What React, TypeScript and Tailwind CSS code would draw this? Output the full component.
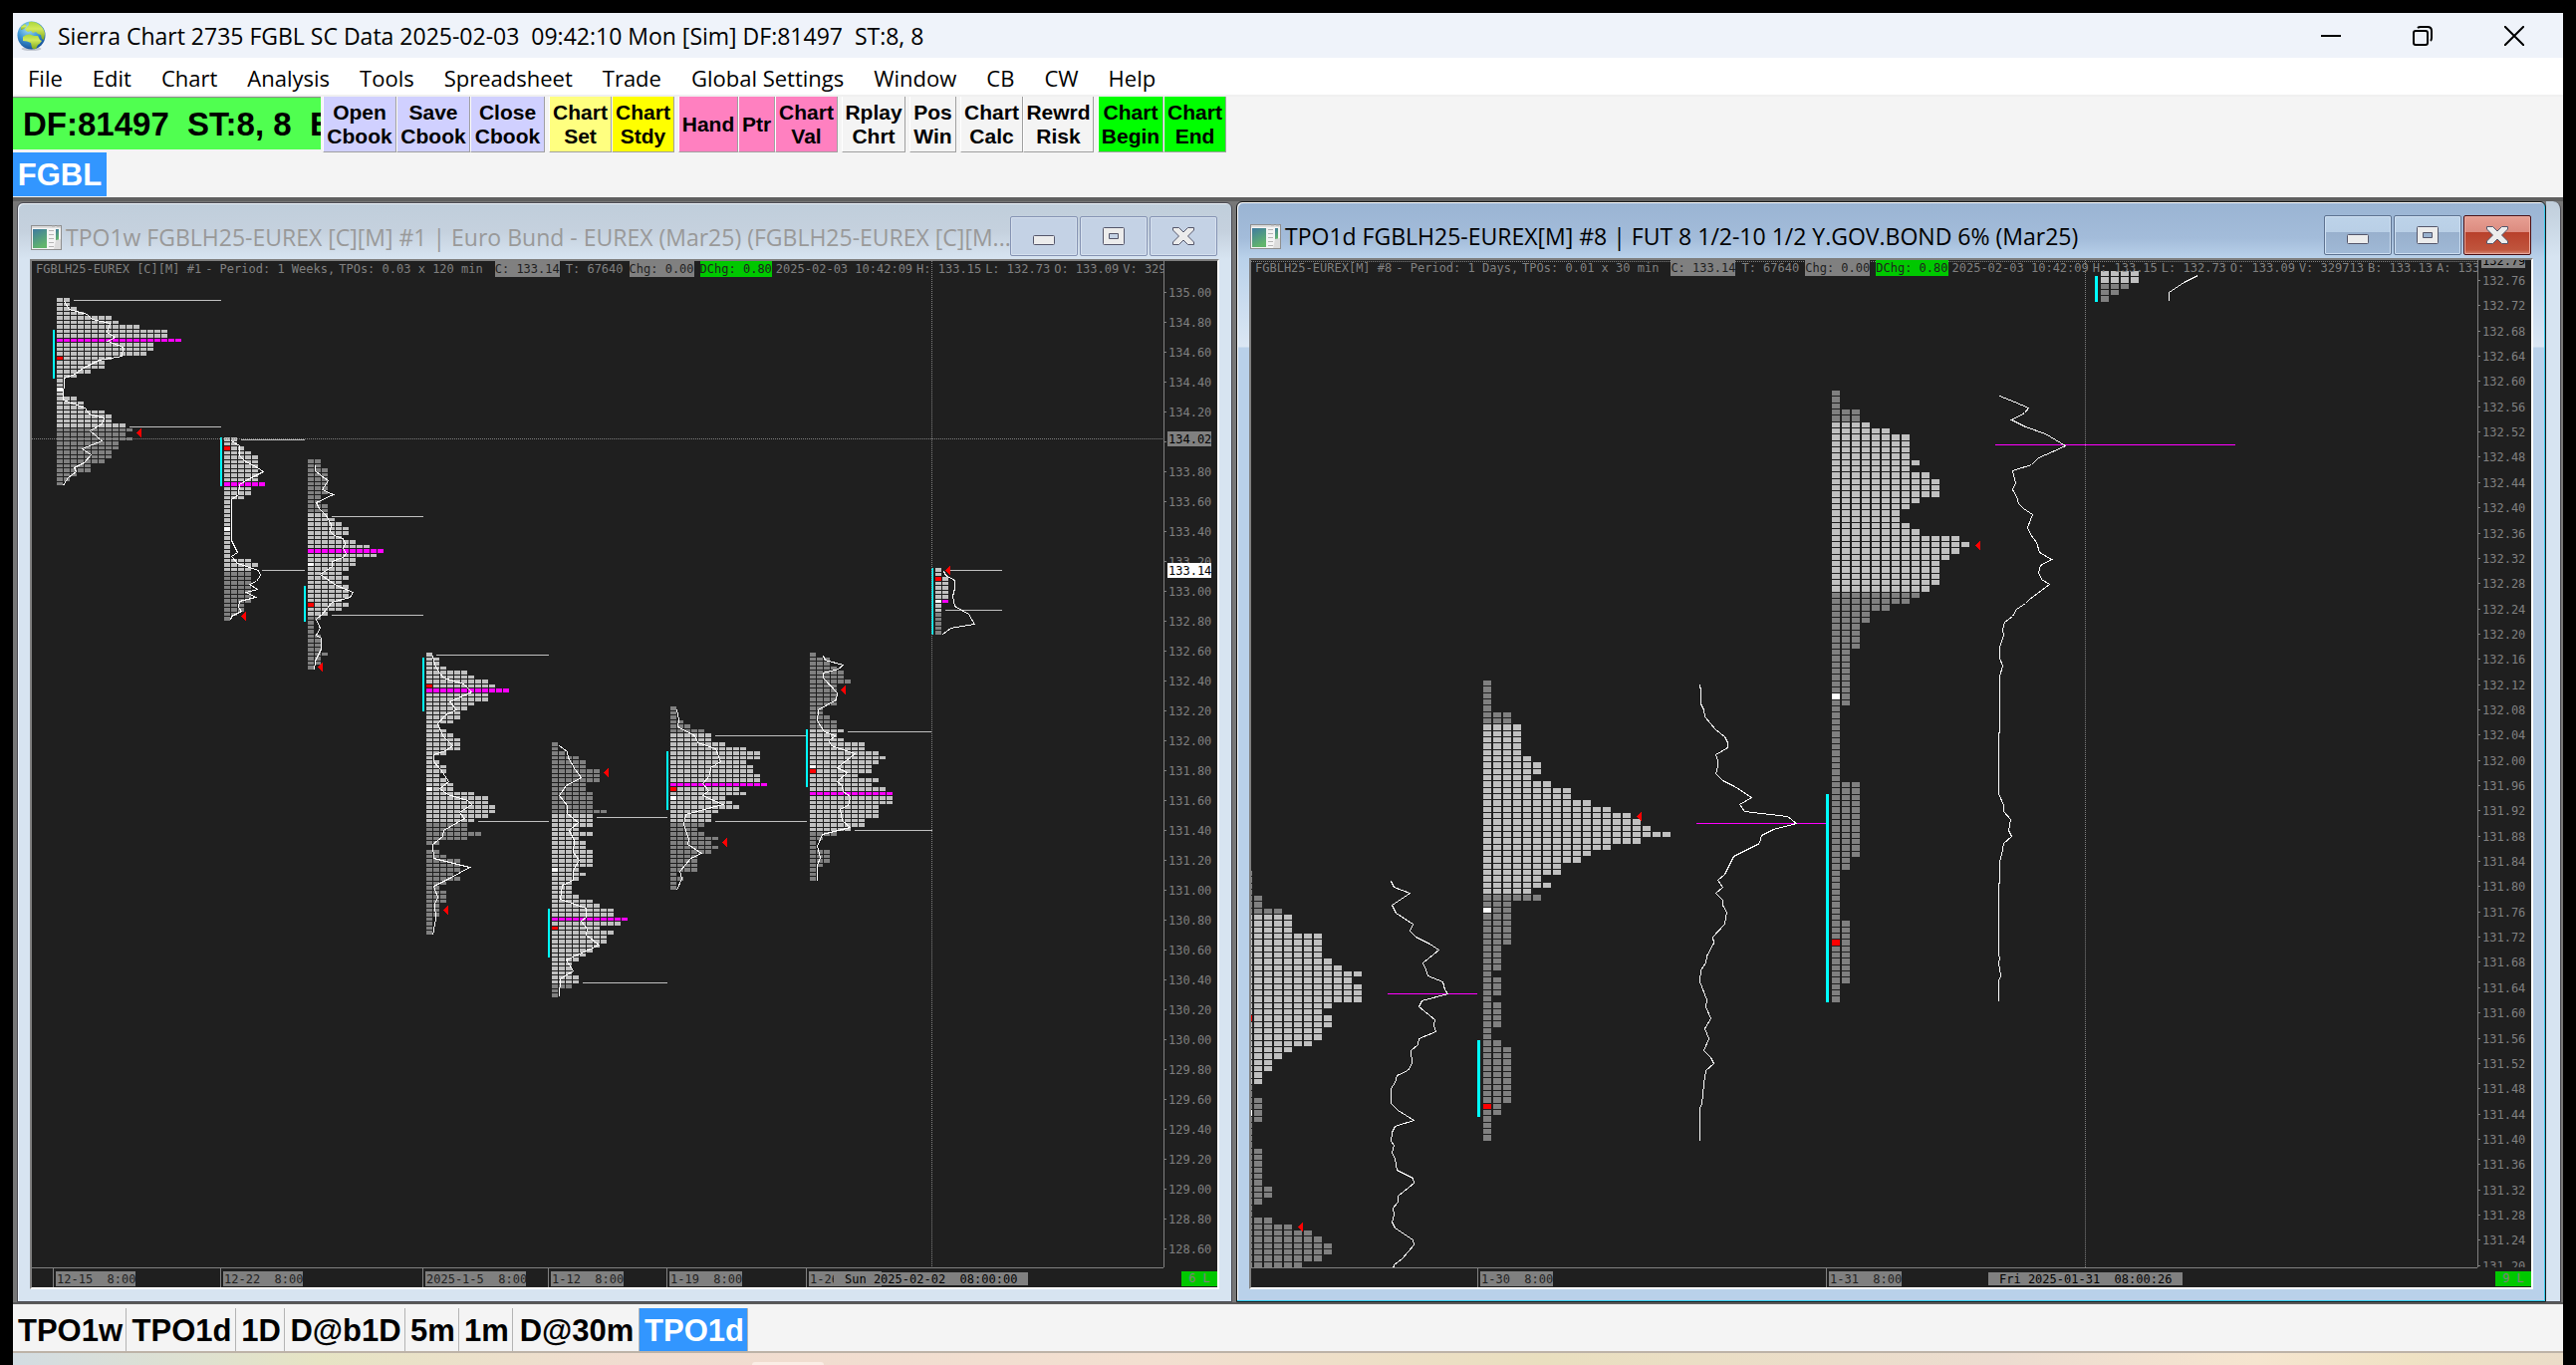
import { type ReactNode } from 'react';
import clsx from 'clsx';

type Point = [number, number];

type Profile = {
  x: number;
  y: number;
  rows: number[];
  va: Point; // first and last row inside the value area
  poc?: number;
  open?: number;
  mid?: number;
  range?: Point; // initial balance bar, top and bottom
  levels?: [number, number, number][]; // x1, x2, y
  pocLine?: [number, number, number];
  arrow?: Point;
  trace?: Point[]; // relative to x, y
};

const run = (value: number, times: number) => Array<number>(times).fill(value);

const weekly: Profile[] = [
  {
    x: 57, y: 299, va: [0, 28], poc: 9, open: 13, mid: 20, range: [331, 380],
    rows: [2, 2, 3, 4, 8, 9, 12, 16, 16, 18, 14, 14, 13, 8, 7, 7, 5, 3, 1, 1, 1, 1, 3, 4, 4, 7, 8, 8, 10, 11, 10, 11, 9, 9, 8, 8, 7, 5, 5, 3, 2, 1],
    levels: [[74, 222, 301], [130, 222, 428]],
    arrow: [137, 434],
    trace: [[7, 3], [12, 11], [30, 16], [35, 21], [53, 25], [50, 34], [58, 39], [51, 43], [66, 49], [65, 58], [42, 62], [26, 70], [18, 76], [7, 80], [6, 102], [28, 110], [32, 116], [47, 120], [45, 126], [33, 133], [45, 143], [25, 151], [34, 157], [27, 165], [17, 170], [19, 174], [11, 180], [7, 186], [6, 188]],
  },
  {
    x: 225, y: 439, va: [0, 29], poc: 10, open: 2, mid: 20, range: [439, 488],
    rows: [2, 2, 3, 4, 5, 5, 5, 5, 5, 5, 6, 4, 4, 3, ...run(1, 13), 4, 5, 4, 4, 4, 4, 4, 4, 4, 4, 3, 3, 2, 1],
    levels: [[242, 306, 441], [263, 306, 572]],
    arrow: [242, 618],
    trace: [[7, 3], [15, 8], [15, 18], [20, 23], [33, 30], [39, 34], [25, 41], [15, 47], [14, 57], [7, 62], [7, 103], [13, 115], [7, 119], [13, 126], [34, 133], [36, 138], [32, 144], [25, 147], [33, 152], [22, 155], [31, 160], [15, 164], [14, 170], [17, 174], [7, 179], [6, 183]],
  },
  {
    x: 309, y: 461, va: [12, 34], poc: 20, open: 32, mid: 23, range: [588, 624],
    rows: [2, 2, 3, 3, 3, 3, 3, 3, 2, 2, 3, 3, 3, 4, 5, 6, 6, 5, 7, 9, 11, 10, 7, 7, 6, 5, 6, 5, 6, 6, 6, 5, 6, 5, 3, 2, 1, 1, 1, 2, 2, 2, 2, 3, 2, 2, 1],
    levels: [[333, 425, 518], [333, 425, 617]],
    arrow: [319, 669],
    trace: [[7, 5], [7, 11], [13, 16], [20, 21], [14, 30], [25, 35], [8, 43], [11, 49], [18, 56], [23, 65], [22, 72], [26, 76], [35, 79], [37, 84], [35, 89], [38, 94], [35, 98], [24, 102], [24, 107], [12, 115], [28, 126], [45, 133], [42, 138], [24, 143], [14, 155], [8, 160], [12, 169], [8, 176], [13, 179], [13, 190], [7, 202], [6, 211]],
  },
  {
    x: 428, y: 655, va: [0, 37], poc: 8, open: 7, mid: 30, range: [660, 714],
    rows: [1, 2, 2, 3, 6, 7, 9, 10, 12, 9, 9, 7, 6, 5, 5, 4, 2, 3, 4, 5, 5, 5, 3, 1, 2, 3, 3, 2, 3, 4, 4, 7, 9, 9, 10, 10, 9, 7, 6, 6, 8, 6, 2, 0, 2, 3, 5, 5, 5, 4, 5, 3, 2, 3, 3, 3, 2, 2, 2, 1, 1, 1, 1],
    levels: [[438, 551, 657], [480, 551, 824]],
    arrow: [445, 913],
    trace: [[6, 3], [8, 12], [13, 20], [17, 25], [37, 31], [45, 39], [23, 49], [30, 57], [19, 62], [11, 71], [16, 83], [26, 93], [19, 98], [7, 102], [7, 109], [14, 117], [22, 129], [13, 136], [21, 142], [41, 148], [45, 152], [33, 160], [38, 166], [17, 178], [16, 184], [6, 192], [7, 206], [43, 215], [23, 226], [7, 234], [11, 245], [8, 252], [9, 267], [6, 283]],
  },
  {
    x: 554, y: 745, va: [16, 53], poc: 39, open: 41, mid: 28, range: [912, 961],
    rows: [1, 1, 2, 4, 5, 5, 7, 7, 7, 5, 5, 6, 6, 6, 6, 8, 6, 6, 6, 4, 6, 4, 5, 5, 6, 6, 6, 6, 4, 5, 4, 3, 3, 3, 4, 6, 7, 9, 9, 11, 10, 7, 9, 8, 8, 7, 6, 5, 4, 3, 3, 3, 4, 4, 3, 1, 1],
    levels: [[599, 670, 820], [585, 670, 986]],
    arrow: [606, 775],
    trace: [[7, 3], [15, 9], [16, 15], [23, 27], [29, 35], [14, 43], [7, 53], [15, 63], [15, 71], [26, 80], [17, 88], [22, 98], [21, 110], [27, 118], [21, 128], [21, 138], [10, 143], [8, 157], [34, 166], [34, 175], [29, 179], [35, 187], [34, 193], [47, 203], [14, 218], [21, 229], [8, 237], [7, 255]],
  },
  {
    x: 673, y: 709, va: [6, 25], poc: 17, open: 18, mid: 20, range: [754, 813],
    rows: [1, 1, 1, 2, 3, 5, 6, 6, 8, 11, 13, 13, 11, 12, 12, 13, 13, 14, 10, 11, 8, 9, 10, 7, 6, 6, 5, 4, 5, 7, 6, 7, 6, 4, 4, 4, 4, 1, 2, 1, 1],
    levels: [[718, 810, 738], [718, 810, 824]],
    arrow: [725, 845],
    trace: [[6, 3], [8, 13], [7, 20], [24, 29], [27, 36], [45, 42], [50, 55], [40, 61], [39, 69], [32, 77], [38, 84], [32, 89], [52, 98], [15, 108], [13, 118], [18, 133], [17, 138], [31, 147], [20, 152], [9, 165], [11, 172], [6, 184]],
  },
  {
    x: 813, y: 655, va: [17, 39], poc: 31, open: 26, mid: 25, range: [732, 790],
    rows: [1, 3, 3, 4, 5, 5, 6, 4, 4, 4, 4, 4, 2, 2, 3, 4, 4, 5, 4, 5, 8, 8, 10, 11, 10, 9, 9, 7, 10, 9, 11, 12, 12, 12, 10, 10, 10, 8, 8, 6, 4, 2, 1, 1, 3, 3, 3, 2, 1, 1, 1],
    levels: [[851, 936, 734], [858, 936, 833]],
    arrow: [844, 692],
    trace: [[13, 3], [15, 7], [33, 12], [28, 16], [13, 20], [13, 25], [27, 40], [26, 47], [8, 57], [7, 68], [14, 79], [25, 83], [19, 88], [21, 93], [45, 101], [27, 115], [37, 120], [27, 129], [32, 133], [33, 139], [40, 144], [39, 152], [30, 157], [32, 168], [40, 175], [12, 182], [7, 194], [10, 205], [7, 213], [7, 228]],
  },
  {
    x: 939, y: 570, va: [0, 9], poc: 7, open: 2, mid: 7, range: [570, 637],
    rows: [1, 1, 2, 2, 2, 2, 2, 2, ...run(1, 7)],
    levels: [[953, 1006, 572], [949, 1006, 612]],
    arrow: [949, 572],
    trace: [[8, 3], [10, 7], [19, 12], [19, 20], [17, 28], [19, 38], [33, 46], [39, 56], [15, 60], [7, 66]],
  },
];

const daily: Profile[] = [
  { x: 1249, y: 874, va: [9, 9], rows: run(1, 4) },
  {
    x: 1249, y: 899, va: [3, 29], open: 19, mid: 34,
    rows: [2, 2, 4, 5, 5, 5, 8, 8, 8, 8, 9, 10, 12, 11, 12, 12, 12, 9, 8, 9, 9, 8, 8, 7, 5, 4, 3, 3, 2, 2, 1, 1, 2, 2, 2, 2, 1, 1, 1, 1, ...run(2, 6), 3, 3, 2, 1, 1, 3, 5, 7, 8, 9, 9, 8, 6],
    pocLine: [1393, 1483, 997],
    arrow: [1303, 1231],
    trace: [[147, -15], [150, -9], [166, -3], [148, 9], [152, 17], [169, 28], [166, 35], [172, 41], [186, 48], [195, 54], [179, 67], [182, 74], [184, 80], [199, 86], [201, 94], [204, 98], [178, 105], [175, 111], [191, 124], [190, 130], [192, 136], [175, 143], [174, 149], [167, 155], [168, 168], [164, 175], [153, 180], [151, 187], [147, 193], [147, 208], [154, 215], [170, 225], [151, 231], [148, 237], [147, 246], [150, 250], [148, 257], [151, 264], [153, 275], [169, 283], [170, 288], [154, 301], [154, 307], [149, 313], [150, 320], [148, 327], [151, 333], [169, 345], [170, 350], [158, 364], [150, 370], [149, 374]],
  },
  {
    x: 1489, y: 683, va: [7, 33], open: 67, mid: 36, range: [1044, 1121],
    rows: [1, 1, 1, 1, 1, 3, 3, 4, 4, 4, 4, 4, 5, 6, 6, 5, 7, 9, 9, 11, 13, 15, 16, 17, 19, 16, 13, 11, 10, 8, 8, 6, 7, 5, 6, ...run(3, 7), 2, 2, 2, 2, 1, 2, 2, 2, 1, 2, 2, 2, 2, 1, 1, 2, ...run(3, 9), 2, 2, 1, 1, 1, 1],
    pocLine: [1703, 1833, 826],
    arrow: [1643, 819],
    trace: [[217, 4], [218, 10], [218, 23], [221, 29], [222, 36], [233, 49], [242, 56], [245, 62], [245, 67], [233, 74], [235, 80], [235, 86], [233, 93], [240, 100], [252, 106], [269, 117], [257, 124], [262, 131], [305, 136], [314, 143], [291, 149], [279, 155], [277, 163], [251, 176], [242, 194], [235, 200], [240, 207], [233, 213], [240, 220], [240, 225], [244, 232], [242, 244], [230, 257], [231, 263], [224, 276], [223, 283], [218, 290], [217, 302], [224, 320], [223, 327], [228, 339], [222, 349], [226, 359], [221, 371], [228, 378], [231, 384], [223, 391], [221, 404], [219, 425], [217, 428], [217, 461]],
  },
  {
    x: 1839, y: 392, va: [5, 31], open: 87, mid: 48, range: [797, 1006],
    rows: [1, 1, 1, 3, 3, 4, 6, 8, 8, 8, 8, 9, 8, 10, 11, 11, 11, 9, 8, 7, 7, 8, 9, 13, 14, 13, 12, 11, 11, 11, 11, 10, 9, 8, 6, 4, 4, 3, 3, 3, 3, ...run(2, 9), ...run(1, 12), ...run(3, 12), 2, 2, ...run(1, 8), ...run(2, 10), 1, 1, 1],
    pocLine: [2003, 2244, 446],
    arrow: [1983, 547],
    trace: [[168, 5], [183, 11], [197, 17], [193, 22], [180, 29], [194, 36], [214, 43], [234, 55], [221, 61], [207, 67], [200, 74], [181, 80], [184, 92], [181, 99], [185, 106], [187, 113], [192, 118], [201, 124], [196, 137], [199, 144], [205, 152], [208, 162], [220, 169], [209, 175], [207, 182], [210, 189], [218, 194], [198, 209], [194, 213], [185, 219], [181, 226], [173, 232], [171, 239], [172, 245], [168, 257], [168, 268], [171, 276], [168, 286], [167, 404], [172, 416], [172, 422], [179, 430], [177, 441], [180, 447], [172, 454], [170, 465], [168, 472], [168, 493], [167, 495], [167, 566], [168, 569], [167, 574], [169, 587], [167, 592], [167, 612]],
  },
  {
    x: 2109, y: 272, va: [0, 1], range: [277, 303],
    rows: [4, 4, 3, 2, 1],
    trace: [[97, 4], [83, 11], [68, 21], [68, 29]],
  },
];

const LIGHT = '#c0c0c0';
const DARK = '#808080';
const MAGENTA = '#ff00ff';

function TpoProfile({ p, pitch, col, bar }: { p: Profile; pitch: number; col: number; bar: number }) {
  const cellW = col > 8 ? col - 2 : col - 1;
  const paths: Record<string, string> = {};
  p.rows.forEach((count, r) => {
    const top = Math.round(p.y + r * pitch);
    const h = Math.round(p.y + (r + 1) * pitch) - top - 1;
    for (let c = 0; c < count; c++) {
      let fill = r >= p.va[0] && r <= p.va[1] ? LIGHT : DARK;
      if (r === p.poc) fill = MAGENTA;
      if (c === 0 && r === p.open) fill = '#ff0000';
      if (c === 0 && r === p.mid) fill = '#ffffff';
      paths[fill] = (paths[fill] || '') + `M${p.x + c * col} ${top}h${cellW}v${h}h-${cellW}z`;
    }
  });
  return (
    <g shapeRendering="crispEdges">
      {Object.entries(paths).map(([fill, d]) => <path key={fill} d={d} fill={fill} />)}
      {p.range && <rect x={p.x - bar * 2} y={p.range[0]} width={bar} height={p.range[1] - p.range[0]} fill="#00ffff" />}
      {p.levels?.map(([x1, x2, y]) => <rect key={y} x={x1} y={y} width={x2 - x1} height={1} fill={LIGHT} />)}
      {p.pocLine && <rect x={p.pocLine[0]} y={p.pocLine[2]} width={p.pocLine[1] - p.pocLine[0]} height={1} fill={MAGENTA} />}
      {p.trace && (
        <polyline points={p.trace.map(([dx, dy]) => `${p.x + dx + 0.5},${p.y + dy + 0.5}`).join(' ')} fill="none" stroke="#fff" />
      )}
      {p.arrow && <path d={`M${p.arrow[0]} ${p.arrow[1] + 0.5}l5 -4.5v9z`} fill="#ff0000" />}
    </g>
  );
}

type ChartProps = {
  name: string;
  header: string[];
  profiles: Profile[];
  origin: Point;
  pitch: number;
  col: number;
  bar: number;
  crosshair: Point;
  prices: { first: number; last: number; step: number; y: number; gap: number };
  priceMarks: { label: string; y: number; white?: boolean }[];
  times: { label: string; x: number }[];
  cursor: { label: string; x: number };
  status: string;
};

const mono = "font-['DejaVu_Sans_Mono',monospace] text-[12px]";

function Chart(props: ChartProps) {
  const { header, profiles, origin, pitch, col, bar, crosshair, prices, priceMarks, times, cursor } = props;
  const count = Math.round((prices.first - prices.last) / prices.step) + 1;
  const tags = ['C: 133.14', 'T: 67640', 'Chg: 0.00', 'DChg: 0.80'];
  return (
    <div className={clsx(mono, 'grid min-h-0 flex-1 grid-cols-[minmax(0,1fr)_54px] grid-rows-[minmax(0,1fr)_20px] border-2 border-t-[#7f7f7f] border-l-[#7f7f7f] border-r-white border-b-white bg-[#1f1f1f] text-[#808080]')}>
      <div className="relative min-h-0 overflow-hidden">
        <svg className="block h-full w-full" role="img" aria-label={props.name}>
          {/* profiles are stored in workspace pixels */}
          <g transform={`translate(${-origin[0]} ${-origin[1]})`}>
            {profiles.map((p, i) => <TpoProfile key={i} p={p} pitch={pitch} col={col} bar={bar} />)}
          </g>
          <g stroke="#808080" strokeDasharray="1 1">
            <line x1={0} x2="100%" y1={crosshair[1] + 0.5} y2={crosshair[1] + 0.5} />
            <line x1={crosshair[0] + 0.5} x2={crosshair[0] + 0.5} y1={0} y2="100%" />
          </g>
        </svg>
        <div className="absolute inset-x-0 top-0 flex h-4 gap-1 overflow-hidden pl-1 leading-4 whitespace-nowrap">
          {header.map(t => <span key={t}>{t}</span>)}
          <div className="ml-2 flex gap-1.5">
            {tags.map((t, i) => (
              <span key={t} className={clsx(i !== 1 && 'text-[#1f1f1f]', (i === 0 || i === 2) && 'bg-[#808080]', i === 3 && 'bg-[#00c800]')}>
                {t}
              </span>
            ))}
          </div>
          {['2025-02-03 10:42:09', 'H: 133.15', 'L: 132.73', 'O: 133.09', 'V: 329713', 'B: 133.13', 'A: 133.14'].map(t => <span key={t}>{t}</span>)}
        </div>
      </div>

      <svg className="block h-full w-full border-l border-[#808080]">
        {Array.from({ length: count }, (_, i) => {
          const y = prices.y + i * prices.gap;
          return (
            <g key={i} fill="#808080">
              <rect x={0} y={Math.round(y)} width={2} height={1} />
              <text x={4} y={Math.round(y) + 5}>{(prices.first - i * prices.step).toFixed(2)}</text>
            </g>
          );
        })}
        {priceMarks.map(m => (
          <g key={m.label}>
            <rect x={3} y={m.y - 7} width={44} height={15} fill={m.white ? '#fff' : '#808080'} />
            <text x={4} y={m.y + 5}>{m.label}</text>
          </g>
        ))}
      </svg>

      <svg className="block h-full w-full border-t border-[#808080]">
        {times.map(t => (
          <g key={t.label}>
            <rect x={t.x} y={0} width={1} height={20} fill="#808080" />
            <rect x={t.x + 3} y={3} width={t.label.length * 7 + 3} height={15} fill="#808080" />
            <text x={t.x + 4} y={15} fill="#1f1f1f" xmlSpace="preserve">{t.label}</text>
          </g>
        ))}
        <rect x={cursor.x} y={4} width={195} height={13} fill="#808080" />
        <text x={cursor.x + 11} y={15} xmlSpace="preserve">{cursor.label}</text>
      </svg>

      <div className="flex items-end justify-end">
        <div className="mb-px h-[15px] w-9 bg-[#00c800] text-center leading-[15px] text-[#808080]">{props.status}</div>
      </div>
    </div>
  );
}

function ChartIcon({ id }: { id: string }) {
  return (
    <svg width="31" height="25" viewBox="0 0 31 25" className="shrink-0" aria-hidden="true">
      <defs>
        <linearGradient id={id} x1="0" y1="0" x2="0.4" y2="1">
          <stop offset="0" stopColor="#3f7aa0" />
          <stop offset="1" stopColor="#62b56c" />
        </linearGradient>
      </defs>
      <rect x="0.5" y="0.5" width="30" height="24" fill="#f4f4f4" stroke="#8f8f8f" />
      <rect x="1" y="1" width="29" height="2" fill="#dcdcdc" />
      <path d="M21 1h3M26 1h3" stroke="#aaa" />
      <rect x="2" y="4" width="14" height="19" fill={`url(#${id})`} />
      <path d="M18 5.500h5M18 9.500h5M18 13.500h5M18 17.500h5M18 21.500h5" stroke="#b5b5b5" />
      <rect x="25" y="4" width="3" height="11" fill={`url(#${id})`} />
      <path d="M25 15l5-1v10h-7z" fill="#dcdcdc" />
    </svg>
  );
}

const glyphs: Record<string, ReactNode> = {
  Minimize: <rect x="0.5" y="9.500" width="21" height="9" rx="1" />,
  Maximize: <path fillRule="evenodd" d="M1.500 1.500h19q1 0 1 1v15q0 1-1 1h-19q-1 0-1-1v-15q0-1 1-1zM6.500 7.500v5h9v-5z" />,
  Close: <path d="M0.500 1.500h6l4.500 4.500 4.500-4.500h6v2.500l-6 6 6 6v2.500h-6l-4.500-4.500-4.500 4.500h-6v-2.500l6-6-6-6z" />,
};

function ChildWindow({ title, active, className, children }: { title: string; active?: boolean; className: string; children: ReactNode }) {
  return (
    <section
      className={clsx(
        'flex min-w-0 flex-col rounded-t-md border px-3 pb-3',
        active
          ? 'border-[#1a1a1a] bg-[linear-gradient(#9ab4d3_0,#a3bcda_36px,#b9d1ea_56px,#dbe7f4_145px,#b9d1ea_146px)] shadow-[inset_-1px_-1px_#35c8e8,inset_1px_1px_#fff]'
          : 'border-[#4a4a52] bg-[linear-gradient(#c0cedb_0,#c5d1de_28px,#d7e4f1_56px)] shadow-[inset_1px_1px_#eef4fa]',
        className,
      )}
    >
      <header className="flex h-14 shrink-0 items-start pr-0.5">
        <div className="flex h-14 min-w-0 flex-1 items-center gap-1 pt-3 pl-px">
          <ChartIcon id={active ? 'tile-active' : 'tile'} />
          <h2 className={clsx('min-w-0 text-[23px] leading-8 whitespace-nowrap', active ? 'text-black' : 'text-[#999]')}>{title}</h2>
        </div>
        <div className="mt-[13px] flex gap-0.5">
          {Object.keys(glyphs).map(name => (
            <button
              key={name}
              type="button"
              aria-label={name}
              className={clsx(
                'flex h-10 w-[68px] items-center justify-center rounded-xs border',
                !active && 'border-[#8593b3] bg-[#c4d2e5] shadow-[inset_0_0_0_1px_#d6e0ee]',
                active && name !== 'Close' && 'border-[#5d7290] bg-[linear-gradient(#bdd3e9_0,#b9cfe6_16px,#98b0cd_16px,#a0b9d6_100%)] shadow-[inset_0_0_0_1px_#cfe0f2]',
                active && name === 'Close' && 'border-[#4a0f14] bg-[linear-gradient(#e7a094_0,#dc8b7f_16px,#b8402b_16px,#c0553d_34px,#d58a75_100%)] shadow-[inset_0_0_0_1px_#eaa99d]',
              )}
            >
              <svg width="22" height="20" viewBox="0 0 22 20" fill="#ececec" stroke="#54566a" aria-hidden="true">{glyphs[name]}</svg>
            </button>
          ))}
        </div>
      </header>
      {children}
    </section>
  );
}

const menu = ['File', 'Edit', 'Chart', 'Analysis', 'Tools', 'Spreadsheet', 'Trade', 'Global Settings', 'Window', 'CB', 'CW', 'Help'];

const toolbar = [
  [
    { label: 'Open Cbook', style: 'w-[74px] bg-[#d0d0ff]' },
    { label: 'Save Cbook', style: 'w-[74px] bg-[#d0d0ff]' },
    { label: 'Close Cbook', style: 'w-[75px] bg-[#d0d0ff]' },
  ],
  [
    { label: 'Chart Set', style: 'w-[63px] bg-[#ffff80]' },
    { label: 'Chart Stdy', style: 'w-[63px] bg-[#ffff00]' },
  ],
  [
    { label: 'Hand', style: 'w-[60px] bg-[#ff80c0]' },
    { label: 'Ptr', style: 'w-[37px] bg-[#ff80c0]' },
    { label: 'Chart Val', style: 'w-[63px] bg-[#ff80c0]' },
  ],
  [{ label: 'Rplay Chrt', style: 'w-[64px] bg-[#f4f4f4]' }],
  [{ label: 'Pos Win', style: 'w-[47px] bg-[#f4f4f4]' }],
  [
    { label: 'Chart Calc', style: 'w-[63px] bg-[#f4f4f4]' },
    { label: 'Rewrd Risk', style: 'w-[71px] bg-[#f4f4f4]' },
  ],
  [
    { label: 'Chart Begin', style: 'w-[66px] bg-[#00ff00]' },
    { label: 'Chart End', style: 'w-[63px] bg-[#00ff00]' },
  ],
];

const tabs = [
  { label: 'TPO1w', w: 'w-[114px]' },
  { label: 'TPO1d', w: 'w-[110px]' },
  { label: '1D', w: 'w-[49px]' },
  { label: 'D@b1D', w: 'w-[121px]' },
  { label: '5m', w: 'w-[54px]' },
  { label: '1m', w: 'w-[54px]' },
  { label: 'D@30m', w: 'w-[127px]' },
  { label: 'TPO1d', w: 'w-[109px]', active: true },
];

function Globe() {
  return (
    <svg width="29" height="30" viewBox="0 0 29 30" aria-hidden="true">
      <defs>
        <radialGradient id="sea" cx="0.4" cy="0.25" r="0.8">
          <stop offset="0" stopColor="#a8e0f4" />
          <stop offset="0.5" stopColor="#3d97d6" />
          <stop offset="1" stopColor="#124a94" />
        </radialGradient>
        <linearGradient id="land" x1="0" y1="0" x2="0" y2="1">
          <stop offset="0" stopColor="#a9d63c" />
          <stop offset="0.4" stopColor="#d3ea5c" />
          <stop offset="1" stopColor="#7fa81c" />
        </linearGradient>
      </defs>
      <ellipse cx="14.500" cy="28" rx="10" ry="2" fill="#c3c8d2" />
      <circle cx="14.500" cy="14.500" r="14" fill="url(#sea)" />
      <path d="M12 1q6-1.500 11 3 4.500 4 5 9l-1 6-2-1-1-4-3-1-2-2-3 1-2-2-3 1-3-2 2-3 2-2z" fill="url(#land)" />
      <path d="M4 6l4-3 2 2-3 3-3 1z" fill="url(#land)" />
      <path d="M6 16q3-3 7-2.500l4 1.500 4 0 2 4 2 1q-2 3-4 4l-2 4q-3 .5-4-1l-1-5-4-1.500-4-.5z" fill="url(#land)" />
    </svg>
  );
}

export default function App() {
  return (
    <div className="flex h-screen flex-col overflow-hidden bg-black px-[13px] pt-[13px] font-['Open_Sans','Noto_Sans',sans-serif] text-black">
      <header className="flex h-[45px] shrink-0 items-center bg-[#eff3fa] pl-1">
        <Globe />
        <h1 className="ml-3 flex-1 pt-0.5 text-[23px] whitespace-pre">Sierra Chart 2735 FGBL SC Data 2025-02-03  09:42:10 Mon [Sim] DF:81497  ST:8, 8</h1>
        <div className="flex pr-[3px]">
          <button type="button" aria-label="Minimize" className="flex h-10 w-[92px] items-center justify-center">
            <svg width="20" height="20" stroke="#000" strokeWidth="2" aria-hidden="true"><path d="M0 10h20" /></svg>
          </button>
          <button type="button" aria-label="Restore" className="flex h-10 w-[92px] items-center justify-center">
            <svg width="20" height="20" fill="none" stroke="#000" strokeWidth="2" aria-hidden="true">
              <rect x="1" y="5" width="14" height="14" rx="2" />
              <path d="M5 2q1-1 3-1h7q4 0 4 4v7q0 2-1 3" />
            </svg>
          </button>
          <button type="button" aria-label="Close" className="flex h-10 w-[92px] items-center justify-center">
            <svg width="20" height="20" stroke="#000" strokeWidth="2" aria-hidden="true"><path d="M0 0l20 20M20 0L0 20" /></svg>
          </button>
        </div>
      </header>

      <nav className="flex h-[39px] shrink-0 items-center gap-[30px] border-b-2 border-[#f0f0f0] bg-white pt-1 pl-[15px] text-[22px]">
        {menu.map(m => <button key={m} type="button">{m}</button>)}
      </nav>

      <div className="flex h-14 shrink-0 gap-1 bg-[#f4f4f4] font-['Liberation_Sans',Arial,sans-serif] font-bold">
        <div className="mr-[-2px] h-[53px] w-[309px] overflow-hidden border-t border-[#8c8c8c] bg-[#50ff50] pl-2.5 text-[33px] leading-[53px] whitespace-pre">DF:81497  ST:8, 8  E</div>
        {toolbar.map((group, i) => (
          <div key={i} className="flex">
            {group.map(b => (
              <button key={b.label} type="button" className={clsx(b.style, 'border-r border-b border-l border-r-[#a0a0a0] border-b-[#a0a0a0] border-l-white text-center text-[21px] leading-6')}>
                {b.label}
              </button>
            ))}
          </div>
        ))}
      </div>

      <div className="flex h-[45px] shrink-0 bg-[#f4f4f4] pb-px font-['Liberation_Sans',Arial,sans-serif]">
        <button type="button" className="h-11 w-[94px] bg-[#3296ff] text-[31px] font-bold text-white">FGBL</button>
      </div>

      <main className="flex min-h-0 flex-1 border-t-4 border-b-2 border-t-[#5f5f5f] border-b-[#5a5a5a] bg-[#777] pr-0.5 pl-1">
        <ChildWindow title="TPO1w FGBLH25-EUREX [C][M] #1 | Euro Bund - EUREX (Mar25) (FGBLH25-EUREX [C][M..." className="mt-px mr-1 flex-[1194]">
          <Chart
            name="Weekly TPO profile"
            header={['FGBLH25-EUREX [C][M] #1', '- Period: 1 Weeks,', 'TPOs: 0.03 x 120 min']}
            profiles={weekly}
            origin={[32, 262]}
            pitch={4.5}
            col={7}
            bar={2}
            crosshair={[903, 178]}
            prices={{ first: 135, last: 128.6, step: 0.2, y: 31, gap: 30 }}
            priceMarks={[{ label: '134.02', y: 178 }, { label: '133.14', y: 310, white: true }]}
            times={[
              { label: '12-15  8:00', x: 21 },
              { label: '12-22  8:00', x: 189 },
              { label: '2025-1-5  8:00', x: 392 },
              { label: '1-12  8:00', x: 518 },
              { label: '1-19  8:00', x: 637 },
              { label: '1-26  8:00', x: 777 },
            ]}
            cursor={{ label: 'Sun 2025-02-02  08:00:00', x: 805 }}
            status="6 L"
          />
        </ChildWindow>
        <ChildWindow active title="TPO1d FGBLH25-EUREX[M] #8 | FUT 8 1/2-10 1/2 Y.GOV.BOND 6% (Mar25)" className="flex-[1289]">
          <Chart
            name="Daily TPO profile"
            header={['FGBLH25-EUREX[M] #8', '- Period: 1 Days,', 'TPOs: 0.01 x 30 min']}
            profiles={daily}
            origin={[1256, 261]}
            pitch={6.3375}
            col={10}
            bar={3}
            crosshair={[837, 1]}
            prices={{ first: 132.76, last: 131.2, step: 0.04, y: 20, gap: 25.35 }}
            priceMarks={[{ label: '132.79', y: 0 }]}
            times={[{ label: '1-30  8:00', x: 227 }, { label: '1-31  8:00', x: 577 }]}
            cursor={{ label: 'Fri 2025-01-31  08:00:26', x: 740 }}
            status="9 L"
          />
        </ChildWindow>
        <div className="w-[15px] shrink-0 rounded-tr-lg border-r border-b border-[#4a4a52] bg-[linear-gradient(#c0cedb_0,#d7e4f1_56px)]" />
      </main>

      <footer className="flex h-[47px] shrink-0 bg-[#f4f4f4] pt-1 font-['Liberation_Sans',Arial,sans-serif] text-[31px] font-bold">
        {tabs.map((t, i) => (
          <button key={i} type="button" className={clsx(t.w, 'border-r border-[#b4b4b4] pl-0.5 whitespace-nowrap', t.active && 'bg-[#3296ff] text-white')}>
            {t.label}
          </button>
        ))}
      </footer>
      <div className="flex h-3.5 shrink-0 items-end border-t-2 border-[#bdb3a8] bg-[linear-gradient(90deg,#d3dce2,#e6e4c4_12%,#f0dcd0_24%,#f2dfd0_45%,#e9dfbf_60%,#ecdcd0_78%,#f5e5cf_88%,#efe2c4_94%,#eadcc8)]">
        <div className="ml-[742px] h-[3px] w-[72px] rounded-t-sm bg-[#fbeee6]" />
      </div>
    </div>
  );
}
